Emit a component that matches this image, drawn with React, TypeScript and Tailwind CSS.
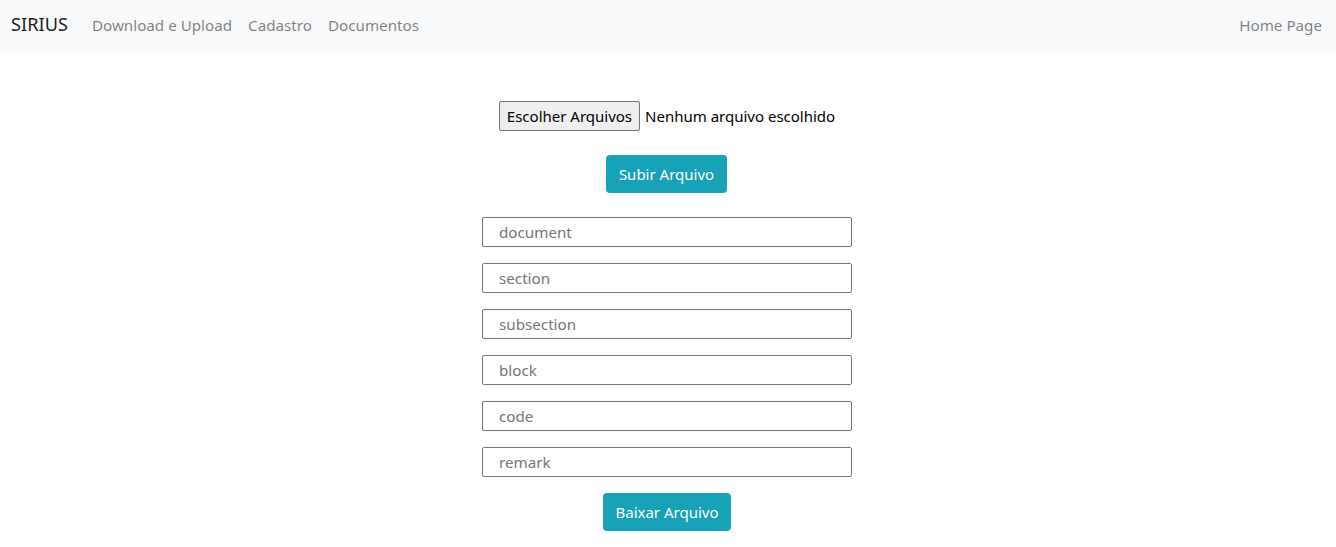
import React from "react";

const FIELDS = ["document", "section", "subsection", "block", "code", "remark"];

const font = { fontFamily: '"Segoe UI", "Noto Sans", "Open Sans", sans-serif' };

export default function App() {
  return (
    <div className="min-h-screen bg-white text-[#212529]" style={font}>
      {/* navbar */}
      <nav className="h-[53px] bg-[#f8f9fa] flex items-center pl-[11px] pr-[14px] pb-[3px]">
        <span className="text-[18.2px] text-black/90 mr-[24px]">SIRIUS</span>
        <div className="flex gap-[16px] text-[15.2px] text-black/50">
          <a>Download e Upload</a>
          <a>Cadastro</a>
          <a>Documentos</a>
        </div>
        <a className="ml-auto text-[15.2px] text-black/50">Home Page</a>
      </nav>

      <div className="flex flex-col items-center pt-[48px]">
        {/* file input */}
        <div className="flex items-center h-[30px] text-[15px] text-black -ml-[2px]">
          <button className="h-[30px] px-[7px] bg-[#efefef] border border-[#767676] rounded-[2px] text-[15px]">
            Escolher Arquivos
          </button>
          <span className="ml-[5px]">Nenhum arquivo escolhido</span>
        </div>

        <button className="mt-[24px] h-[38px] px-[13px] rounded-[4px] bg-[#17a2b8] text-white text-[15px] -ml-[3px]">
          Subir Arquivo
        </button>

        <div className="mt-[24px] flex flex-col gap-[16px] -ml-[2px]">
          {FIELDS.map((f) => (
            <input
              key={f}
              placeholder={f}
              className="w-[370px] h-[30px] border border-[#767676] rounded-[2px] pl-[16px] text-[15.2px] placeholder:text-[#757575] outline-none"
            />
          ))}
        </div>

        <button className="mt-[16px] h-[38px] px-[12px] rounded-[4px] bg-[#17a2b8] text-white text-[15px] -ml-[2px]">
          Baixar Arquivo
        </button>
      </div>
    </div>
  );
}
